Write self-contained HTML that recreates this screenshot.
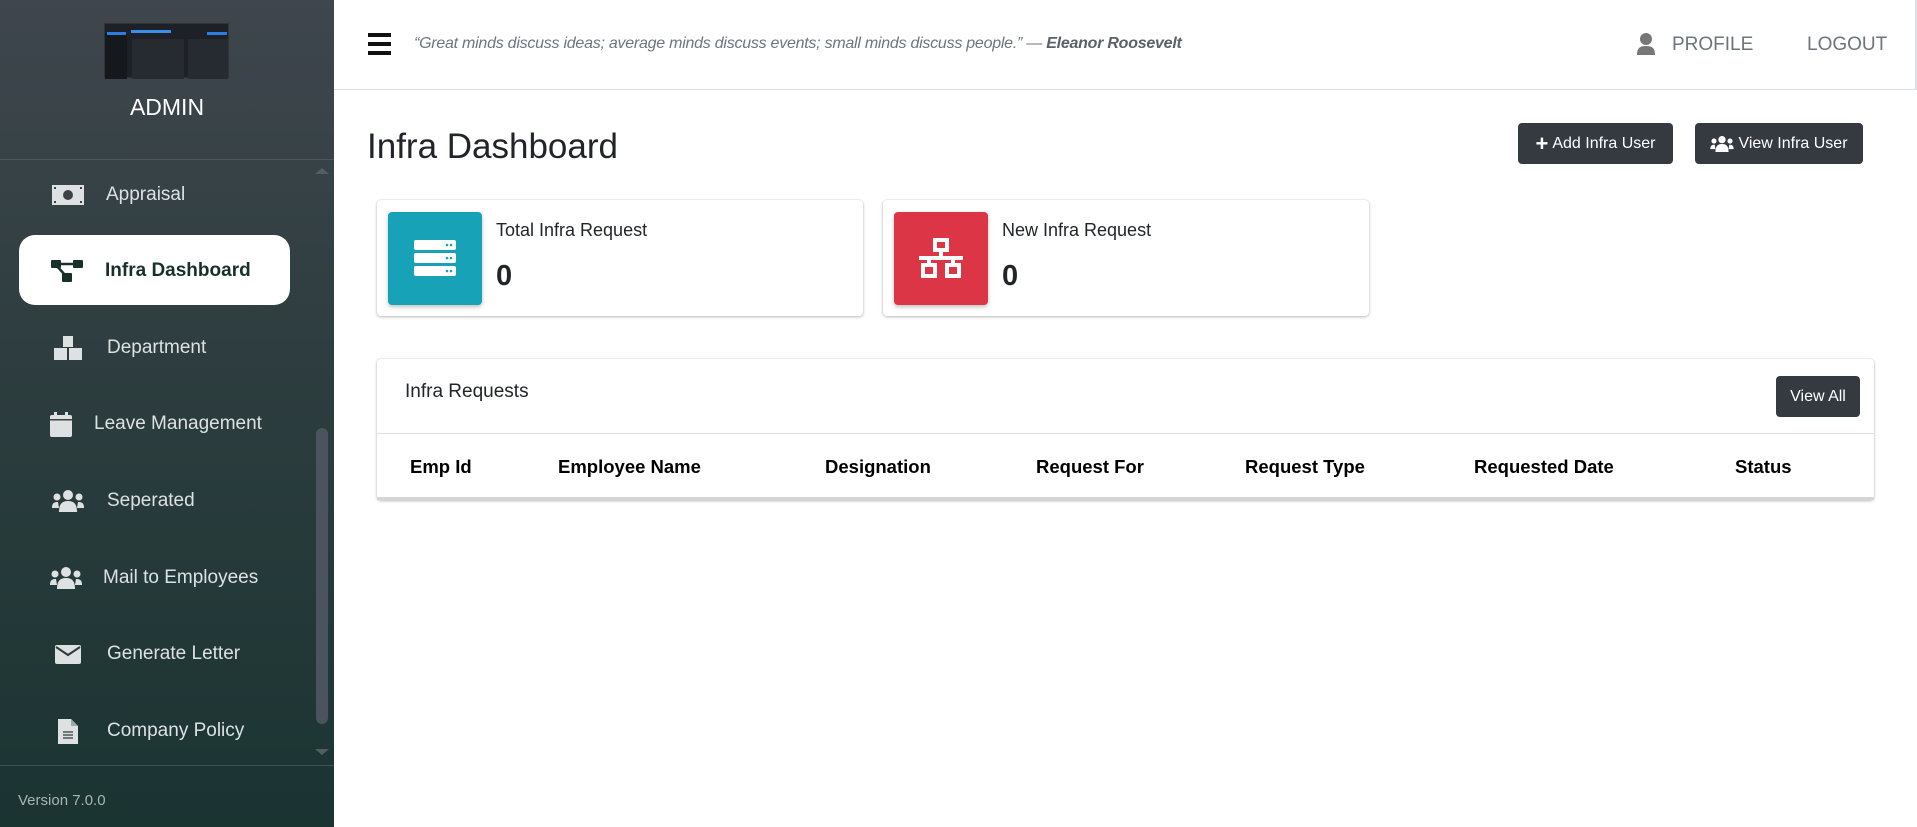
<!DOCTYPE html>
<html><head><meta charset="utf-8"><style>
*{box-sizing:border-box;margin:0;padding:0}
body{width:1917px;height:827px;overflow:hidden;background:#fff;font-family:"Liberation Sans",sans-serif;position:relative;color:#212529}
.abs{position:absolute;white-space:nowrap}
#sb{position:absolute;left:0;top:0;width:334px;height:827px;background:linear-gradient(#3f464d 0%,#2f3e40 40%,#1a3432 100%)}
.mi{position:absolute;left:0;width:334px;color:#dde1e2;font-size:19px;display:flex;align-items:center}
.mi svg{position:absolute}
.mi span{position:absolute}
.hdr{position:absolute;left:334px;top:0;width:1583px;height:90px;border-bottom:1px solid #dee2e6;border-right:2px solid #dee2e6}
.btn{position:absolute;background:#343a40;color:#fff;border-radius:4px;font-size:16px;display:flex;align-items:center;justify-content:center;gap:4px}
.card{position:absolute;background:#fff;border-radius:4px;box-shadow:0 0 1px rgba(0,0,0,.2),0 1px 3px rgba(0,0,0,.25)}
.th{position:absolute;top:456px;font-weight:bold;font-size:18.5px;color:#000}
</style></head><body>
<div id="sb">
 <div class="abs" style="left:104px;top:23px;width:125px;height:55px;background:#1d2127;border:1px solid #333">
  <div style="position:absolute;left:0;top:9px;width:22px;height:46px;background:#15181c"></div>
  <div style="position:absolute;left:2px;top:8px;width:19px;height:3px;background:#2a7de1"></div>
  <div style="position:absolute;left:26px;top:6px;width:40px;height:3px;background:#3b8fe8"></div>
  <div style="position:absolute;left:102px;top:8px;width:20px;height:3px;background:#2a7de1"></div>
  <div style="position:absolute;left:27px;top:15px;width:52px;height:40px;background:#262b31"></div>
  <div style="position:absolute;left:83px;top:15px;width:40px;height:40px;background:#262b31"></div>
 </div>
 <div class="abs" style="left:0;width:334px;text-align:center;top:94px;color:#fff;font-size:23px">ADMIN</div>
 <div class="abs" style="left:0;top:159px;width:334px;height:1px;background:#4d565c"></div>
 <div class="abs" style="left:0;top:765px;width:334px;height:1px;background:#3e5250"></div>
 <div class="abs" style="left:18px;top:792px;color:#a9b4b3;font-size:15px">Version 7.0.0</div>
 <div class="abs" style="left:316px;top:428px;width:12px;height:296px;border-radius:6px;background:#4b545c"></div>
 <div class="abs" style="left:315px;top:168px;width:0;height:0;border-left:7px solid transparent;border-right:7px solid transparent;border-bottom:6px solid #555d63"></div>
 <div class="abs" style="left:315px;top:749px;width:0;height:0;border-left:7px solid transparent;border-right:7px solid transparent;border-top:6px solid #555d63"></div>

 <div class="mi" style="top:180px;height:30px"><svg style="left:52px" width="32" height="20" viewBox="0 0 32 20"><rect width="32" height="20" fill="#dde1e2"/><circle cx="16" cy="10" r="5" fill="#3a4246"/><rect x="2" y="2" width="2" height="2" fill="#3a4246"/><rect x="28" y="2" width="2" height="2" fill="#3a4246"/><rect x="2" y="16" width="2" height="2" fill="#3a4246"/><rect x="28" y="16" width="2" height="2" fill="#3a4246"/></svg><span style="left:106px">Appraisal</span></div>

 <div class="abs" style="left:19px;top:235px;width:271px;height:70px;background:#fff;border-radius:16px"></div>
 <div class="mi" style="top:256px;height:30px;color:#17302c;font-weight:bold"><svg style="left:51px" width="32" height="24" viewBox="0 0 32 24"><rect x="0" y="1" width="10" height="8" rx="1" fill="#17302c"/><rect x="22" y="1" width="10" height="8" rx="1" fill="#17302c"/><rect x="11" y="14" width="10" height="9" rx="1" fill="#17302c"/><path d="M8 5H23M5 6L14 16" stroke="#17302c" stroke-width="2.5"/></svg><span style="left:105px">Infra Dashboard</span></div>

 <div class="mi" style="top:333px;height:30px"><svg style="left:54px" width="28" height="24" viewBox="0 0 28 24"><rect x="9" y="0" width="10" height="11" fill="#dde1e2"/><rect x="0" y="12" width="13" height="12" fill="#dde1e2"/><rect x="15" y="12" width="13" height="12" fill="#dde1e2"/></svg><span style="left:107px">Department</span></div>

 <div class="mi" style="top:409px;height:30px"><svg style="left:50px" width="22" height="25" viewBox="0 0 22 25"><rect x="0" y="3" width="22" height="22" rx="2" fill="#dde1e2"/><rect x="4" y="0" width="3" height="5" fill="#dde1e2"/><rect x="15" y="0" width="3" height="5" fill="#dde1e2"/><rect x="0" y="7" width="22" height="1.5" fill="#3a4246"/></svg><span style="left:94px">Leave Management</span></div>

 <div class="mi" style="top:486px;height:30px"><svg style="left:52px" width="32" height="22" viewBox="0 0 32 22"><circle cx="16" cy="5" r="5" fill="#dde1e2"/><circle cx="5" cy="7" r="3.5" fill="#dde1e2"/><circle cx="27" cy="7" r="3.5" fill="#dde1e2"/><path d="M7 22C7 14 10 11 16 11S25 14 25 22Z" fill="#dde1e2"/><path d="M0 18C0 13 2 12 6 12L7 18Z M32 18C32 13 30 12 26 12L25 18Z" fill="#dde1e2"/></svg><span style="left:107px">Seperated</span></div>

 <div class="mi" style="top:563px;height:30px"><svg style="left:50px" width="32" height="22" viewBox="0 0 32 22"><circle cx="16" cy="5" r="5" fill="#dde1e2"/><circle cx="5" cy="7" r="3.5" fill="#dde1e2"/><circle cx="27" cy="7" r="3.5" fill="#dde1e2"/><path d="M7 22C7 14 10 11 16 11S25 14 25 22Z" fill="#dde1e2"/><path d="M0 18C0 13 2 12 6 12L7 18Z M32 18C32 13 30 12 26 12L25 18Z" fill="#dde1e2"/></svg><span style="left:103px">Mail to Employees</span></div>

 <div class="mi" style="top:639px;height:30px"><svg style="left:55px" width="26" height="19" viewBox="0 0 26 19"><rect width="26" height="19" rx="2" fill="#dde1e2"/><path d="M1 2L13 10L25 2" stroke="#2a3c3c" stroke-width="2" fill="none"/></svg><span style="left:107px">Generate Letter</span></div>

 <div class="mi" style="top:716px;height:30px"><svg style="left:58px" width="20" height="25" viewBox="0 0 20 25"><path d="M0 0H13L20 7V25H0Z" fill="#dde1e2"/><path d="M13 0V7H20" fill="#9aa" /><path d="M5 13H15M5 16H15M5 19H15" stroke="#2a3c3c" stroke-width="1.3"/></svg><span style="left:107px">Company Policy</span></div>
</div>

<div class="hdr"></div>
<svg class="abs" style="left:368px;top:33px" width="23" height="22" viewBox="0 0 23 22"><rect y="0" width="23" height="4" fill="#111"/><rect y="9" width="23" height="4" fill="#111"/><rect y="18" width="23" height="4" fill="#111"/></svg>
<div class="abs" style="left:414px;top:35px;font-size:16px;font-style:italic;color:#6c757d;letter-spacing:-0.25px">“Great minds discuss ideas; average minds discuss events; small minds discuss people.” — <b style="color:#5a6168">Eleanor Roosevelt</b></div>
<svg class="abs" style="left:1637px;top:33px" width="18" height="22" viewBox="0 0 18 22"><circle cx="9" cy="6" r="6" fill="#777"/><path d="M0 22C0 15 3 13 9 13S18 15 18 22Z" fill="#777"/></svg>
<div class="abs" style="left:1672px;top:34px;font-size:19px;color:#6c757d">PROFILE</div>
<div class="abs" style="left:1807px;top:34px;font-size:19px;color:#6c757d">LOGOUT</div>

<div class="abs" style="left:367px;top:127px;font-size:35px;color:#212529">Infra Dashboard</div>
<div class="btn" style="left:1518px;top:123px;width:155px;height:41px"><span style="font-size:22px;font-weight:bold">+</span>Add Infra User</div>
<div class="btn" style="left:1695px;top:123px;width:168px;height:41px"><svg width="24" height="16" viewBox="0 0 32 22"><circle cx="16" cy="5" r="5" fill="#fff"/><circle cx="5" cy="7" r="3.5" fill="#fff"/><circle cx="27" cy="7" r="3.5" fill="#fff"/><path d="M7 22C7 14 10 11 16 11S25 14 25 22Z" fill="#fff"/><path d="M0 18C0 13 2 12 6 12L7 18Z M32 18C32 13 30 12 26 12L25 18Z" fill="#fff"/></svg>View Infra User</div>

<div class="card" style="left:377px;top:200px;width:486px;height:116px"></div>
<div class="abs" style="left:388px;top:212px;width:94px;height:93px;background:#17a2b8;border-radius:4px;box-shadow:0 2px 4px rgba(0,0,0,.25)"></div>
<svg class="abs" style="left:414px;top:240px" width="42" height="36" viewBox="0 0 42 36"><rect x="0" y="0" width="42" height="10" rx="2" fill="#fff"/><rect x="0" y="13" width="42" height="10" rx="2" fill="#fff"/><rect x="0" y="26" width="42" height="10" rx="2" fill="#fff"/><g fill="#17a2b8"><circle cx="33" cy="5" r="1.3"/><circle cx="37" cy="5" r="1.3"/><circle cx="33" cy="18" r="1.3"/><circle cx="37" cy="18" r="1.3"/><circle cx="33" cy="31" r="1.3"/><circle cx="37" cy="31" r="1.3"/></g></svg>
<div class="abs" style="left:496px;top:220px;font-size:18px">Total Infra Request</div>
<div class="abs" style="left:496px;top:260px;font-size:29px;font-weight:bold">0</div>

<div class="card" style="left:883px;top:200px;width:486px;height:116px"></div>
<div class="abs" style="left:894px;top:212px;width:94px;height:93px;background:#dc3545;border-radius:4px;box-shadow:0 2px 4px rgba(0,0,0,.25)"></div>
<svg class="abs" style="left:919px;top:238px" width="44" height="40" viewBox="0 0 44 40"><g fill="none" stroke="#fff" stroke-width="4"><rect x="16" y="2" width="12" height="10"/><rect x="4" y="27" width="12" height="11"/><rect x="28" y="27" width="12" height="11"/><path d="M22 12V20M0 20H44M10 20V27M34 20V27"/></g></svg>
<div class="abs" style="left:1002px;top:220px;font-size:18px">New Infra Request</div>
<div class="abs" style="left:1002px;top:260px;font-size:29px;font-weight:bold">0</div>

<div class="card" style="left:377px;top:359px;width:1497px;height:141px"></div>
<div class="abs" style="left:377px;top:433px;width:1497px;height:1px;background:#dee2e6"></div>
<div class="abs" style="left:377px;top:497px;width:1497px;height:3px;background:#d3d6d9"></div>
<div class="abs" style="left:405px;top:381px;font-size:19px">Infra Requests</div>
<div class="btn" style="left:1776px;top:376px;width:84px;height:41px;font-size:16px">View All</div>
<div class="th" style="left:410px">Emp Id</div>
<div class="th" style="left:558px">Employee Name</div>
<div class="th" style="left:825px">Designation</div>
<div class="th" style="left:1036px">Request For</div>
<div class="th" style="left:1245px">Request Type</div>
<div class="th" style="left:1474px">Requested Date</div>
<div class="th" style="left:1735px">Status</div>
</body></html>
